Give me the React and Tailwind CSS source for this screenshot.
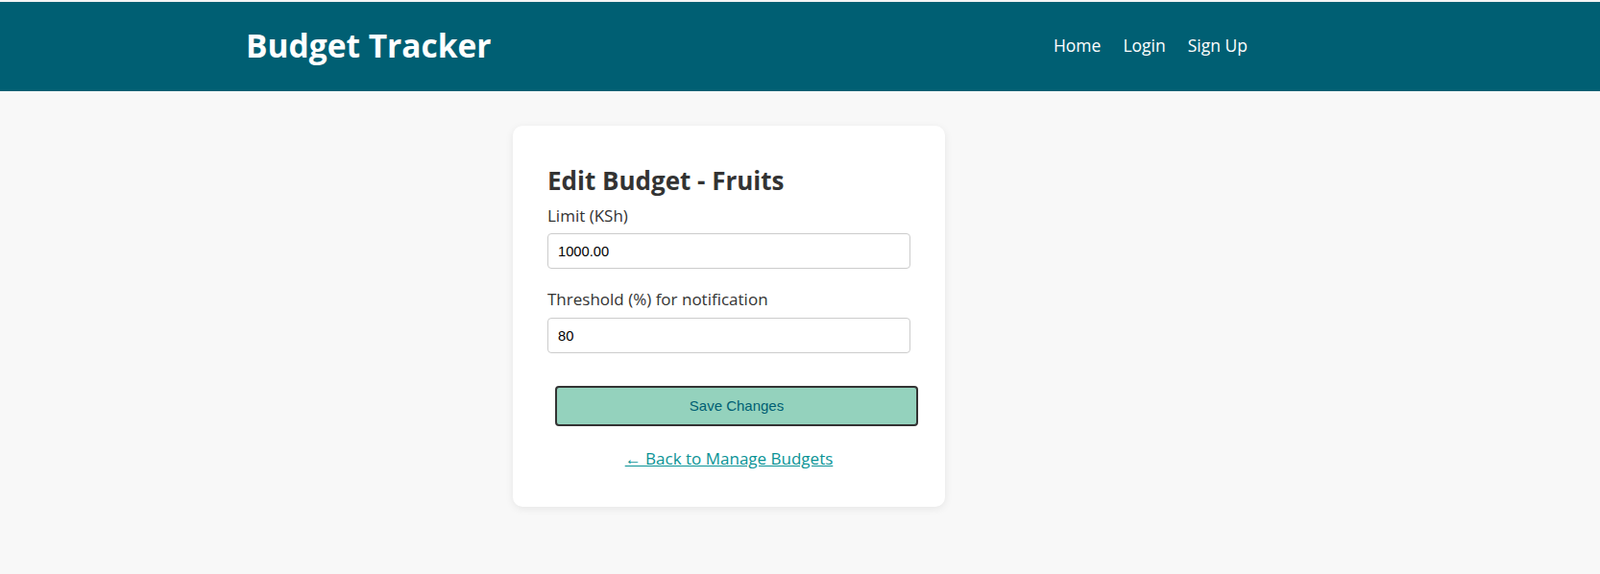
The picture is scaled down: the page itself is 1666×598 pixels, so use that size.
export default function App() {
  const font = { fontFamily: '"Open Sans", "Noto Sans", sans-serif' };
  const arial = { fontFamily: '"Liberation Sans", Arial, sans-serif' };
  return (
    <div className="min-h-[598px] bg-[#f8f8f8] text-[#333]" style={font}>
      <div className="h-[2px] bg-[#f4f4f4]" />
      <header className="h-[93px] bg-[#005f73] flex items-center pb-[3px]">
        <div className="ml-[256px] w-[1043px] flex items-center justify-between">
          <h1 className="text-[33.5px] font-bold text-white leading-[40px]">Budget Tracker</h1>
          <nav className="flex gap-[23px] text-[17.5px] text-white leading-[24px]">
            <a href="#">Home</a>
            <a href="#">Login</a>
            <a href="#">Sign Up</a>
          </nav>
        </div>
      </header>
      <main className="pt-[36px] pb-[70px]">
        <div className="ml-[534px] w-[450px] bg-white rounded-[10px] shadow-[0_2px_8px_rgba(0,0,0,0.08)] pt-[40px] px-[36px] pb-[38px]">
          <h2 className="text-[26px] font-bold leading-[34px] text-[#333]">Edit Budget - Fruits</h2>
          <label className="block mt-[8px] text-[17px] leading-[24px]">Limit (KSh)</label>
          <input
            className="mt-[6px] block w-full h-[37px] border border-[#ccc] rounded-[4px] px-[10px] text-[14.7px] text-black outline-none"
            style={arial}
            defaultValue="1000.00"
          />
          <label className="block mt-[20px] text-[17px] leading-[24px]">Threshold (%) for notification</label>
          <input
            className="mt-[7px] block w-full h-[37px] border border-[#ccc] rounded-[4px] px-[10px] text-[14.7px] text-black outline-none"
            style={arial}
            defaultValue="80"
          />
          <button
            className="mt-[34px] ml-[8px] block w-[378px] h-[42px] bg-[#94d2bd] border-2 border-[#333] rounded-[4px] text-[15px] text-[#005f73]"
            style={arial}
          >
            Save Changes
          </button>
          <div className="mt-[22px] text-center leading-[24px]">
            <a href="#" className="text-[17px] text-[#0a9396] underline">← Back to Manage Budgets</a>
          </div>
        </div>
      </main>
    </div>
  );
}
